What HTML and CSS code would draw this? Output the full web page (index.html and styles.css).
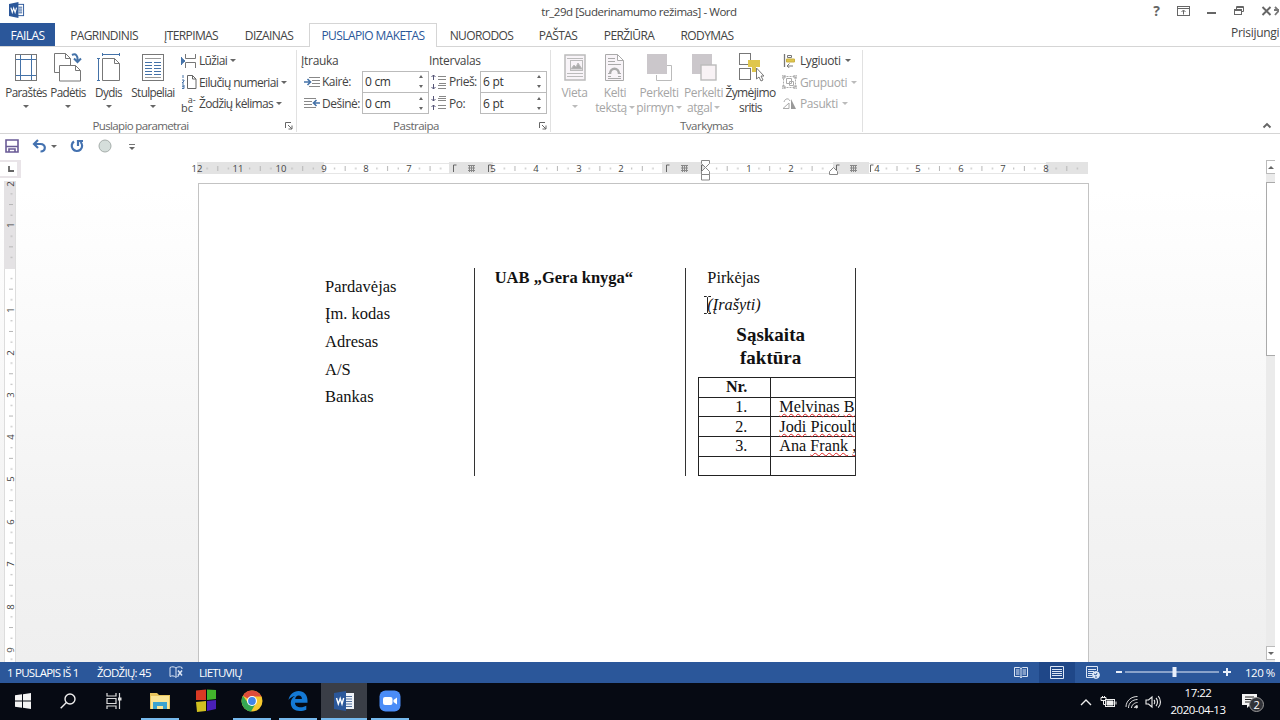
FILE: index.html
```html
<!DOCTYPE html>
<html lang="lt">
<head>
    <meta charset="UTF-8">
    <meta name="viewport" content="width=device-width, initial-scale=1.0">
    <title>tr_29d [Suderinamumo režimas] - Word</title>
    <link rel="stylesheet" href="styles.css">
</head>
<body>
    <header class="titlebar">
        <svg class="word-logo" width="16" height="16" viewBox="0 0 17 17">
            <rect x="8.5" y="2.5" width="7" height="12" fill="#fff" stroke="#2b579a"/>
            <path d="M10 5.5h4M10 7.5h4M10 9.5h4M10 11.5h4" stroke="#2b579a"/>
            <path d="M0 2L10 0V17L0 15Z" fill="#2b579a"/>
            <path d="M2 6l1.5 5L5 6.5 6.5 11 8 6" fill="none" stroke="#fff" stroke-width="1.2"/>
        </svg>
        <div class="title">tr_29d [Suderinamumo režimas] - Word</div>
        <div class="window-controls">
            <span class="help">?</span>
            <svg width="13" height="10" viewBox="0 0 13 10" fill="none" stroke="#666"><rect x=".5" y=".5" width="12" height="9"/><path d="M1 2.5h11M6.5 8.5V4.5M4.5 6l2-2 2 2"/></svg>
            <svg width="13" height="10" viewBox="0 0 13 10"><path d="M2 7h9" stroke="#666" stroke-width="2"/></svg>
            <svg width="13" height="10" viewBox="0 0 13 10" fill="none" stroke="#666"><path d="M4.5 3V.5h7v5H9.5M4.5 1.5h7"/><rect x="2.5" y="3.5" width="7" height="5"/><path d="M2.5 4.5h7"/></svg>
            <svg width="13" height="10" viewBox="0 0 13 10"><path d="M2.5 1l8 8M10.5 1l-8 8" stroke="#666" stroke-width="1.9"/></svg>
            <svg class="cut" width="5" height="10" viewBox="0 0 5 10"><path d="M1 1l8 8M1 9l6-7M0 4h5" stroke="#777" stroke-width="1.8"/></svg>
        </div>
    </header>

    <nav class="tabs">
        <div class="tab file">FAILAS</div>
        <div class="tab t-home">PAGRINDINIS</div>
        <div class="tab t-insert">ĮTERPIMAS</div>
        <div class="tab t-design">DIZAINAS</div>
        <div class="tab active">PUSLAPIO MAKETAS</div>
        <div class="tab t-refs">NUORODOS</div>
        <div class="tab t-mail">PAŠTAS</div>
        <div class="tab t-review">PERŽIŪRA</div>
        <div class="tab t-view">RODYMAS</div>
        <div class="signin">Prisijungi</div>
    </nav>

    <section class="ribbon">
        <div class="group page-setup">
            <div class="tools">
                <div class="big w42">
                    <svg width="24" height="30" viewBox="0 0 24 30" fill="none"><rect x="1.5" y="1.5" width="21" height="26" stroke="#777"/><path d="M6.5 2v25M17.5 2v25M2 6.5h20M2 22.5h20" stroke="#4472a8"/></svg>
                    <span>Paraštės</span><i class="arrow"></i>
                </div>
                <div class="big w42">
                    <svg width="28" height="30" viewBox="0 0 28 30" fill="#fff" stroke="#777"><path d="M.5.5h11l5 5v14h-16zM11.5.5v5h5"/><path d="M5.5 12.5h16l5 5v10.500h-21zM21.5 12.5v5h5"/><path d="M18 2c4-2 6 1 5.500 6M20 5.500l3.500 3.500L27 5.500" fill="none" stroke="#4472a8" stroke-width="2"/></svg>
                    <span>Padėtis</span><i class="arrow"></i>
                </div>
                <div class="big w39">
                    <svg width="24" height="30" viewBox="0 0 24 30" fill="none"><path d="M5.5 5.5h12l5 5v17h-17zM17.5 5.5v5h5" stroke="#777"/><path d="M5 1.5h18M5.5 0v3M22.5 0v3M1.5 6v21M0 5.5h3M0 27.5h3" stroke="#4472a8"/></svg>
                    <span>Dydis</span><i class="arrow"></i>
                </div>
                <div class="big w50">
                    <svg width="24" height="30" viewBox="0 0 24 30" fill="none"><rect x="1.5" y="1.5" width="21" height="26" stroke="#777"/><path d="M4 5.5h16M4 24.5h16" stroke="#999"/><path d="M4 9.5h7M13 9.5h7M4 12.5h7M13 12.5h7M4 15.5h7M13 15.5h7M4 18.5h7M13 18.5h7M4 21.5h7M13 21.5h7" stroke="#4472a8"/></svg>
                    <span>Stulpeliai</span><i class="arrow"></i>
                </div>
                <div class="small-col">
                    <div class="small">
                        <svg width="16" height="14" viewBox="0 0 16 14" fill="none" stroke="#777"><path d="M4.5 0v4.500h10V0M4.5 14V8.500h10V14"/><path d="M.5 3v8M1 4.500l3 2.500-3 2.500z" fill="#4472a8" stroke="#4472a8"/></svg>
                        <span>Lūžiai</span><i class="arrow"></i>
                    </div>
                    <div class="small">
                        <svg width="16" height="14" viewBox="0 0 16 14" fill="none"><path d="M6.5.5h5l3.500 3.500v9.500h-8.500zM11.5.5v3.500h3.500" stroke="#666"/><path d="M2 0v3M1 5h2v1L1 8h2M1 10h2v3.500H1M3 11.700H1" stroke="#4472a8"/></svg>
                        <span>Eilučių numeriai</span><i class="arrow"></i>
                    </div>
                    <div class="small">
                        <span class="abc"><span>b</span><span class="stack"><span class="sup">a-</span><span>c</span></span></span>
                        <span>Žodžių kėlimas</span><i class="arrow"></i>
                    </div>
                </div>
            </div>
            <div class="group-label">Puslapio parametrai</div>
            <svg class="launcher" width="8" height="8" viewBox="0 0 8 8" fill="none" stroke="#666"><path d="M.5 6V.5H6M3 3l4 4M7 3.5V7H3.5"/></svg>
        </div>

        <div class="group paragraph">
            <div class="tools">
                <div class="spacing-col indent">
                    <div class="heading">Įtrauka</div>
                    <div class="field">
                        <svg width="16" height="12" viewBox="0 0 16 12" fill="none"><path d="M5 1.5h11M8 4.5h8M8 7.5h8M5 10.5h11" stroke="#888"/><path d="M0 6h6M3.5 3l3 3-3 3" stroke="#4472a8" stroke-width="1.6"/></svg>
                        <label>Kairė:</label>
                        <div class="spin"><span>0 cm</span><i class="updown"></i></div>
                    </div>
                    <div class="field">
                        <svg width="16" height="12" viewBox="0 0 16 12" fill="none"><path d="M0 1.5h12M0 4.5h8M0 7.5h8M0 10.5h12" stroke="#888"/><path d="M16 6h-6M12.5 3l-3 3 3 3" stroke="#4472a8" stroke-width="1.6"/></svg>
                        <label>Dešinė:</label>
                        <div class="spin"><span>0 cm</span><i class="updown"></i></div>
                    </div>
                </div>
                <div class="spacing-col interval">
                    <div class="heading">Intervalas</div>
                    <div class="field">
                        <svg width="16" height="16" viewBox="0 0 16 16" fill="none"><path d="M7 2.5h8M7 5.5h8M8 9.5h7M7 11.5h8M7 14.5h8" stroke="#888"/><path d="M2.5 6V1M.5 3l2-2 2 2M2.5 10v5M.5 13l2 2 2-2" stroke="#557"/></svg>
                        <label>Prieš:</label>
                        <div class="spin"><span>6 pt</span><i class="updown"></i></div>
                    </div>
                    <div class="field">
                        <svg width="16" height="16" viewBox="0 0 16 16" fill="none"><path d="M8 1.5h7M7 3.5h8M7 5.5h8M7 10.5h8M7 13.5h8" stroke="#888"/><path d="M2.5 1v5M.5 4l2 2 2-2M2.5 15v-5M.5 12l2-2 2 2" stroke="#557"/></svg>
                        <label>Po:</label>
                        <div class="spin"><span>6 pt</span><i class="updown"></i></div>
                    </div>
                </div>
            </div>
            <div class="group-label">Pastraipa</div>
            <svg class="launcher" width="8" height="8" viewBox="0 0 8 8" fill="none" stroke="#666"><path d="M.5 6V.5H6M3 3l4 4M7 3.5V7H3.5"/></svg>
        </div>

        <div class="group arrange">
            <div class="tools">
                <div class="big w41 off">
                    <svg width="24" height="30" viewBox="0 0 24 30" fill="none" stroke="#bbb"><rect x="2" y="2" width="20" height="25" fill="#f8f4f8" stroke-width="1.5"/><path d="M4 5.5h16M4 20.5h16M4 23.5h16"/><rect x="7.5" y="7.5" width="12" height="10"/><path d="M8 16l3-4 2 2 2-4 4 6z" fill="#aaa"/></svg>
                    <span>Vieta</span><i class="arrow"></i>
                </div>
                <div class="big w40 off">
                    <svg width="22" height="30" viewBox="0 0 22 30" fill="none" stroke="#aaa"><path d="M1.5 1.5h12l6 6v20h-18zM13.5 1.5v6h6" fill="#f8f4f8"/><path d="M4 5.5h7M4 8.5h7M4 11.5h13M4 23.5h3M14 23.5h3M4 20.5h2M15 20.5h2M4 25.5h13"/><path d="M6 21c0-7 9-7 9 0" stroke-width="2.5"/></svg>
                    <span>Kelti<br>tekstą<i class="arrow"></i></span>
                </div>
                <div class="big w48 off">
                    <svg width="27" height="30" viewBox="0 0 27 30"><path d="M21 12.5h4.500v15h-15V22" fill="#fff" stroke="#bbb"/><rect x="1" y="1" width="20" height="20" fill="#cbc7cb"/></svg>
                    <span>Perkelti<br>pirmyn<i class="arrow"></i></span>
                </div>
                <div class="big w41 off">
                    <svg width="26" height="30" viewBox="0 0 26 30"><rect x="1" y="1" width="20" height="20" fill="#cbc7cb"/><rect x="10" y="12" width="15" height="15" fill="#f8f2f5" stroke="#bbb" stroke-width="1.4"/></svg>
                    <span>Perkelti<br>atgal<i class="arrow"></i></span>
                </div>
                <div class="big w53">
                    <svg width="26" height="30" viewBox="0 0 26 30" fill="#fff" stroke="#777"><rect x="1.5" y=".5" width="11" height="11"/><rect x="1.5" y="15.5" width="11" height="11"/><path d="M10 7h12v7h-4v5h-4v-5h-4z" fill="#dfc64c" stroke="none"/><path d="M18.5 15v11l2.500-2 2 4 2-1-2-4h3z"/></svg>
                    <span>Žymėjimo<br>sritis</span>
                </div>
                <div class="small-col">
                    <div class="small">
                        <svg width="15" height="14" viewBox="0 0 15 14" fill="none" stroke="#777"><path d="M2.5 0v13" stroke-width="1.3"/><path d="M5.5 1.5h4v2h-4z"/><path d="M4.5 5h8v3h-8z" fill="#dfc64c" stroke="#c9b044"/><path d="M11 12H5M7.5 9.5L5 12l2.500 2"/></svg>
                        <span>Lygiuoti</span><i class="arrow"></i>
                    </div>
                    <div class="small off">
                        <svg width="15" height="14" viewBox="0 0 15 14" fill="none" stroke="#aaa"><rect x="1.5" y="1.5" width="12" height="11" stroke-dasharray="2 1"/><path d="M4.5 3.5h5v5h-5zM7.5 6.5h4v4h-4zM0 0h3v3H0zM12 0h3v3h-3zM0 11h3v3H0zM12 11h3v3h-3z"/></svg>
                        <span>Grupuoti</span><i class="arrow"></i>
                    </div>
                    <div class="small off">
                        <svg width="15" height="14" viewBox="0 0 15 14"><path d="M1 11.5h6V6zM2 5c1-4 5-4 6-1" fill="none" stroke="#aaa"/><path d="M9 2v10h5z" fill="#999"/></svg>
                        <span>Pasukti</span><i class="arrow"></i>
                    </div>
                </div>
            </div>
            <div class="group-label">Tvarkymas</div>
        </div>
        <svg class="collapse" width="10" height="7" viewBox="0 0 10 7"><path d="M1.5 5.5L5 2l3.500 3.500" fill="none" stroke="#666" stroke-width="1.9"/></svg>
    </section>

    <div class="quickbar">
        <svg width="14" height="14" viewBox="0 0 14 14" fill="none" stroke="#6a5b96" stroke-width="1.6"><path d="M1 1h12v12H1z"/><path d="M1 7.5h12M4 13v-3h6v3"/></svg>
        <svg class="undo" width="16" height="14" viewBox="0 0 16 14" fill="none" stroke="#4472b0" stroke-width="2.2"><path d="M6 1L2 5l4 4M2 5h6.500c6 0 5.500 7.500 0 7.500"/></svg>
        <i class="arrow"></i>
        <svg class="redo" width="14" height="14" viewBox="0 0 14 14" fill="none" stroke="#4472b0" stroke-width="2.2"><path d="M4 2.5a5.200 5.200 0 1 0 6.500.5M8 7V2h5"/></svg>
        <svg class="dot" width="14" height="14" viewBox="0 0 14 14"><circle cx="7" cy="7" r="6" fill="#d5dedb" stroke="#a6aeab"/></svg>
        <span class="customize"><i class="arrow"></i></span>
    </div>

    <main class="workspace">
        <aside class="left-ruler">
            <div class="tab-corner"><svg width="8" height="8" viewBox="0 0 8 8"><path d="M2 1v5h5" fill="none" stroke="#666" stroke-width="1.8"/></svg></div>
            <svg width="20" height="484" viewBox="0 178 20 484">
                <defs>
                    <pattern id="vticks" patternUnits="userSpaceOnUse" x="4" y="268" width="12" height="42.3">
                        <path d="M6.5 10.6h2M5 21.2h4M6.5 31.8h2" stroke="#b5b5b5"/>
                    </pattern>
                </defs>
                <rect x="4" y="181" width="12" height="88" fill="#e4e2e4"/>
                <rect x="4" y="269" width="12" height="393" fill="#fff"/>
                <path d="M15.5 181v481M4.5 269v393" stroke="#ddd"/>
                <rect x="4" y="186" width="12" height="476" fill="url(#vticks)"/>
                <g class="ruler-num">
                    <text transform="translate(14 184) rotate(-90)">2</text>
                    <text transform="translate(14 225) rotate(-90)">1</text>
                    <text transform="translate(14 310) rotate(-90)">1</text>
                    <text transform="translate(14 353) rotate(-90)">2</text>
                    <text transform="translate(14 395) rotate(-90)">3</text>
                    <text transform="translate(14 437) rotate(-90)">4</text>
                    <text transform="translate(14 479) rotate(-90)">5</text>
                    <text transform="translate(14 522) rotate(-90)">6</text>
                    <text transform="translate(14 564) rotate(-90)">7</text>
                    <text transform="translate(14 607) rotate(-90)">8</text>
                    <text transform="translate(14 650) rotate(-90)">9</text>
                </g>
            </svg>
        </aside>

        <div class="canvas">
            <svg class="top-ruler" width="910" height="23" viewBox="190 160 910 23">
                <defs>
                    <pattern id="hticks" patternUnits="userSpaceOnUse" x="706" y="162" width="42.45" height="12">
                        <path d="M10.6 5.5v2M21.2 4v5M31.8 5.5v2" stroke="#b5b5b5"/>
                    </pattern>
                </defs>
                <rect x="197" y="163" width="891" height="11" fill="#fff"/>
                <path d="M197 163.5h891M197 173.5h891" stroke="#e6e6e6"/>
                <path d="M197 162h127v12h-127zM449 162h44v12h-44zM662 162h44v12h-44zM833 162h36v12h-36zM1046 162h42v12h-42z" fill="#e3e3e3"/>
                <path d="M203 162h246v12h-246zM499 162h163v12h-163zM708 162h122v12h-122zM882 162h206v12h-206z" fill="url(#hticks)"/>
                <g class="ruler-num">
                    <text x="197" y="172">12</text>
                    <text x="238" y="172">11</text>
                    <text x="281" y="172">10</text>
                    <text x="324" y="172">9</text>
                    <text x="366" y="172">8</text>
                    <text x="409" y="172">7</text>
                    <text x="493" y="172">5</text>
                    <text x="536" y="172">4</text>
                    <text x="579" y="172">3</text>
                    <text x="621" y="172">2</text>
                    <text x="749" y="172">1</text>
                    <text x="791" y="172">2</text>
                    <text x="877" y="172">4</text>
                    <text x="918" y="172">5</text>
                    <text x="961" y="172">6</text>
                    <text x="1003" y="172">7</text>
                    <text x="1046" y="172">8</text>
                </g>
                <path d="M453.5 172v-7h3M488.5 172v-7h3M666.5 172v-7h3M701.5 172v-7h2M836.5 172v-7h3M870.5 172v-7h3" fill="none" stroke="#666"/>
                <path d="M468 165.5h7M468 168h7M468 170.5h7M469.5 165v7M471.5 165v7M473.5 165v7M681 165.5h7M681 168h7M681 170.5h7M682.5 165v7M684.5 165v7M686.5 165v7M850 165.5h7M850 168h7M850 170.5h7M851.5 165v7M853.5 165v7M855.5 165v7" stroke="#888"/>
                <path d="M701.5 160.5h8v3l-4 4-4-4zM701.5 174.5v-3l4-4 4 4v3zM701.5 174.5h8v5.500h-8zM829.5 174.5v-3l4-4 4 4v3z" fill="#fff" stroke="#888"/>
            </svg>

            <article class="page">
                <div class="layout-table">
                    <div class="cell seller">
                        <p>Pardavėjas</p>
                        <p>Įm. kodas</p>
                        <p>Adresas</p>
                        <p>A/S</p>
                        <p>Bankas</p>
                    </div>
                    <div class="cell company"><p>UAB „Gera knyga“</p></div>
                    <div class="cell buyer">
                        <p>Pirkėjas</p>
                        <p class="fill-in">(Įrašyti)
                            <svg class="ibeam" width="9" height="18" viewBox="0 0 9 18"><path d="M1 .5h2.500l1 1 1-1H8M1 17.5h2.500l1-1 1 1H8M4.5 1.5v15" fill="none" stroke="#222"/></svg>
                        </p>
                        <h1>Sąskaita<br>faktūra</h1>
                        <table class="items">
                            <tr><th>Nr.</th><th></th></tr>
                            <tr><td>1.</td><td><u>Melvinas</u> <u>B</u></td></tr>
                            <tr><td>2.</td><td><u>Jodi</u> <u>Picoult</u></td></tr>
                            <tr><td>3.</td><td>Ana <u>Frank</u> <u>„</u></td></tr>
                            <tr><td></td><td></td></tr>
                        </table>
                    </div>
                </div>
            </article>
        </div>

        <div class="scrollbar">
            <div class="scroll-btn"><i class="arrow up"></i></div>
            <div class="thumb"></div>
            <div class="scroll-btn down"><i class="arrow"></i></div>
        </div>
    </main>

    <footer class="statusbar">
        <span class="pages">1 PUSLAPIS IŠ 1</span>
        <span class="words">ŽODŽIŲ: 45</span>
        <svg class="proof" width="15" height="13" viewBox="0 0 15 13" fill="none" stroke="#dce6f5"><path d="M7 2C5 .5 3 .5 1 1.5v9c2-1 4-1 6 1 1-1 2-1.500 3-1.500M7 2v9M7 2c2-1.500 4-1.500 6-.5V3"/><path d="M9 4.5l4 5M13 4.5l-4 5" stroke-width="1.5"/></svg>
        <span class="lang">LIETUVIŲ</span>
        <div class="views">
            <span class="view"><svg width="14" height="13" viewBox="0 0 14 13" fill="none" stroke="#dce6f5"><path d="M.5 1.5h5l1.500 1 1.500-1h5v9h-5l-1.500 1-1.500-1h-5zM7 2v10M2 4h3.500M2 6h3.500M2 8h3.500M8.5 4H12M8.5 6H12M8.5 8H12"/></svg></span>
            <span class="view on"><svg width="14" height="13" viewBox="0 0 14 13" fill="none" stroke="#dce6f5"><path d="M.5.5h13v12H.5zM2 3.5h10M2 5.5h10M2 7.5h10M2 9.5h10"/></svg></span>
            <span class="view"><svg width="14" height="13" viewBox="0 0 14 13" fill="none" stroke="#dce6f5"><path d="M7 11.5H.5V.5h11V5M2 3.5h8M2 5.5h6M2 7.5h5M2 9.5h4"/><circle cx="10" cy="9" r="3.4" fill="#dce6f5"/><path d="M8 8l2 1 1-2M10 12v-2" stroke="#2b579a"/></svg></span>
        </div>
        <svg class="zoom-slider" width="116" height="14" viewBox="0 0 116 14" stroke="#e8effa"><path d="M1 7h6M108 7h8M112 3v8" stroke-width="2"/><path d="M10 7h94"/><path d="M59.5 2v10" stroke-width="4"/></svg>
        <span class="percent">120 %</span>
    </footer>

    <div class="taskbar">
        <div class="task sys"><svg width="16" height="16" viewBox="0 0 16 16" fill="#f4f4f4"><path d="M0 2.300L7 1.300V7.600H0zM8 1.200L16 0v7.600H8zM0 8.400h7v6.300L0 13.700zM8 8.400h8V16l-8-1.200z"/></svg></div>
        <div class="task sys"><svg width="16" height="16" viewBox="0 0 16 16" fill="none" stroke="#eee" stroke-width="1.4"><circle cx="10" cy="6" r="5"/><path d="M6.4 9.600L.7 15.300"/></svg></div>
        <div class="task sys wide"><svg width="16" height="16" viewBox="0 0 16 16" fill="none" stroke="#ddd" stroke-width="1.2"><path d="M1 0v3h9V0M1 16v-3h9v3M1 5.5h9v5H1zM13.5 0v16"/><path d="M12 6h3.500" stroke-width="3"/></svg></div>
        <div class="task open"><svg width="22" height="18" viewBox="0 0 22 18"><path d="M1 1h7l2 2h11v14H1z" fill="#e8c55d"/><path d="M2 4h18v13H2z" fill="#fae596"/><path d="M4 17v-7h14v7h-4v-3H8v3z" fill="#3ba3d0"/></svg></div>
        <div class="task"><svg width="22" height="24" viewBox="0 0 22 24"><path d="M1 1.5l10-1V11H1z" fill="#d83a24"/><path d="M12 .5L21 1v9l-9 1z" fill="#42b42c"/><path d="M1 13l10-1v10L2 23z" fill="#d0c020"/><path d="M12 12l9-1v9l-9 2z" fill="#4a20b8"/></svg></div>
        <div class="task open"><svg width="22" height="22" viewBox="0 0 22 22"><circle cx="11" cy="11" r="10.5" fill="#f6c92f"/><path d="M11 11L1.900 5.800A10.500 10.500 0 0 1 20.100 5.800L20.500 6.500H11z" fill="#dd4c3b"/><path d="M1.900 5.800A10.500 10.500 0 0 0 10 21.500L15 13 11 15 7 13z" fill="#35a552"/><circle cx="11" cy="11" r="5" fill="#fff"/><circle cx="11" cy="11" r="3.9" fill="#4285e8"/></svg></div>
        <div class="task open"><svg width="20" height="20" viewBox="0 0 20 20"><path d="M.5 9C1.500 3.500 5.500 0 10.500 0 16 0 19.500 4 19.500 9.500v2.300H7c0 3 2.500 4.500 5.500 4.500 2.400 0 4.300-.6 5.800-1.500v3.900C16.500 19.600 14.200 20 11.800 20 6.500 20 2.800 17 2.800 12c0-3 1.500-5.500 4.200-7C4 5.500 2 7 .5 9zM7.200 8h6.700c0-2.200-1-3.500-3.200-3.500-2 0-3.200 1.300-3.500 3.500z" fill="#1479d4"/></svg></div>
        <div class="task open current"><svg width="22" height="20" viewBox="0 0 22 20"><path d="M10 2h11v16H10z" fill="#eef2f8"/><path d="M13 5.5h6M13 8h6M13 10.5h6M13 13h6M13 15.5h6" stroke="#52709f"/><path d="M1 2L13 0v20L1 18z" fill="#2b579a"/><path d="M3.5 7l1.800 6L7.200 7.500 9 13l1.700-6" fill="none" stroke="#fff" stroke-width="1.4"/></svg></div>
        <div class="task open"><svg width="22" height="22" viewBox="0 0 22 22"><rect x=".5" y=".5" width="21" height="21" rx="6" fill="#4a8cf7"/><rect x="4" y="7" width="9.5" height="8" rx="2" fill="#fff"/><path d="M14.5 10l3.500-2.500v7L14.500 12z" fill="#fff"/></svg></div>
        <div class="tray">
            <svg width="12" height="16" viewBox="0 0 12 16"><path d="M1 11l5-5 5 5" fill="none" stroke="#eee" stroke-width="1.4"/></svg>
            <svg class="battery" width="17" height="16" viewBox="0 0 17 16" fill="none" stroke="#eee"><rect x="5.5" y="5.5" width="9" height="7"/><path d="M7 7h6v4H7z" fill="#eee"/><path d="M16 7.5v3M1 3.5h5v3H1zM3.5 6.5v4h2M2.5 2v1M4.5 2v1"/></svg>
            <svg class="wifi" width="14" height="16" viewBox="0 0 14 16" fill="none" stroke="#ddd"><path d="M1 13C1 7 6 2.500 12.500 2.500M3.5 14c0-5 4-8.500 9-8.500M6.5 14c0-3 3-5.500 6-5.500M9.5 14c0-1.500 1.500-2.500 3-2.500"/><circle cx="11.5" cy="13" r="1" fill="#eee"/></svg>
            <svg class="sound" width="17" height="16" viewBox="0 0 17 16" fill="none" stroke="#eee" stroke-width="1.1"><path d="M1 6h2.500L7 3v10l-3.500-3H1zM9 6c1 1 1 3 0 4M11 4c2 2 2 6 0 8M13.200 2.200c3 3 3 8.500 0 11.500"/></svg>
            <div class="clock"><span>17:22</span><span>2020-04-13</span></div>
            <div class="notice">
                <svg width="15" height="15" viewBox="0 0 15 15"><path d="M0 0h15v11H8l-3 3v-3H0z" fill="#f4f4f4"/><path d="M3 3h9M3 5.5h9M3 8h6" stroke="#222"/></svg>
                <span class="badge">2</span>
            </div>
        </div>
    </div>
</body>
</html>
```
FILE: styles.css
```css
* {
    box-sizing: border-box;
}
body {
    margin: 0;
    width: 1280px;
    height: 720px;
    overflow: hidden;
    display: flex;
    flex-direction: column;
    background: #fff;
    color: #444;
    font-family: "Open Sans", "Noto Sans", sans-serif;
    font-size: 12px;
    letter-spacing: -0.3px;
}
svg {
    display: block;
    flex: none;
}
p, h1 {
    margin: 0;
}

/* title bar */
.titlebar {
    display: flex;
    height: 23px;
    padding-left: 9px;
    padding-top: 2px;
}
.word-logo {
    margin-right: -16px;
}
.title {
    width: 1260px;
    flex: none;
    text-align: center;
    line-height: 20px;
    font-size: 11.5px;
    letter-spacing: -0.45px;
}
.window-controls {
    display: flex;
    align-items: center;
    height: 17px;
    gap: 14.4px;
    margin-left: -119px;
}
.help {
    width: 13px;
    text-align: center;
    font-size: 14px;
    font-weight: bold;
    color: #666;
}
.cut {
    margin-left: -13px;
}

/* tabs */
.tabs {
    display: flex;
    height: 24px;
    border-bottom: 1px solid #d5d5d5;
}
.tab {
    height: 23px;
    line-height: 25px;
    text-align: center;
    white-space: nowrap;
    letter-spacing: -0.6px;
}
.file {
    width: 55px;
    background: #2b579a;
    color: #fff;
}
.t-home { width: 98px; }
.t-insert { width: 76px; }
.t-design { width: 80px; }
.t-refs { width: 89px; }
.t-mail { width: 64px; }
.t-review { width: 78px; }
.t-view { width: 78px; }
.active {
    width: 128px;
    height: 24px;
    line-height: 23px;
    background: #fff;
    border: 1px solid #d5d5d5;
    border-bottom: none;
    color: #2b579a;
}
.signin {
    margin-left: auto;
    width: 49px;
    overflow: hidden;
    line-height: 20px;
    white-space: nowrap;
}

/* ribbon */
.ribbon {
    display: flex;
    height: 87px;
    border-bottom: 1px solid #d5d5d5;
    letter-spacing: -0.5px;
}
.group {
    position: relative;
    border-right: 1px solid #e1e1e1;
    height: 82px;
    margin-top: 3px;
}
.page-setup { width: 297px; }
.paragraph { width: 254px; }
.arrange { width: 312px; }
.tools {
    display: flex;
    height: 68px;
}
.page-setup .tools { padding-left: 5px; }
.arrange .tools { padding-left: 3px; }
.group-label {
    text-align: center;
    color: #666;
    font-size: 11.5px;
    line-height: 16px;
    padding-right: 15px;
}
.page-setup .group-label {
    letter-spacing: -0.65px;
}
.arrange .group-label {
    padding-right: 0;
}
.launcher {
    position: absolute;
    right: 3px;
    bottom: 2px;
}
.big {
    display: flex;
    flex-direction: column;
    align-items: center;
    text-align: center;
    padding-top: 2px;
    line-height: 15px;
    white-space: nowrap;
    letter-spacing: -0.65px;
}
.big svg {
    margin-top: 1px;
    margin-bottom: 2px;
}
.big > .arrow {
    margin-top: 5px;
}
.page-setup .big {
    font-size: 11.7px;
}
.off.big {
    letter-spacing: -0.4px;
}
.w39 { width: 39px; }
.w40 { width: 40px; }
.w41 { width: 41px; }
.w42 { width: 42px; }
.w48 { width: 48px; }
.w50 { width: 50px; }
.w53 { width: 53px; }
.arrow {
    display: inline-block;
    border: 3px solid transparent;
    border-top: 3px solid #666;
    border-bottom: 0;
}
.arrow.up {
    border-top: 0;
    border-bottom: 3px solid #666;
}
span .arrow {
    margin-left: 2px;
    vertical-align: 3px;
}
.off {
    color: #a5a5a5;
}
.off .arrow {
    border-top-color: #bbb;
}
.small-col {
    padding-left: 3px;
}
.page-setup .small-col {
    letter-spacing: -0.65px;
}
.arrange .small-col {
    padding-left: 5px;
    letter-spacing: -0.4px;
}
.small {
    display: flex;
    align-items: center;
    height: 21.5px;
    gap: 2px;
    white-space: nowrap;
}
.arrange .small {
    gap: 3px;
}
.small .arrow {
    margin-left: 1px;
}
.abc {
    display: flex;
    align-items: flex-end;
    width: 16px;
    line-height: 9px;
    font-size: 11px;
    letter-spacing: 0;
}
.stack {
    display: flex;
    flex-direction: column;
}
.stack .sup {
    font-size: 9px;
    line-height: 7px;
}

/* indent and spacing fields */
.indent {
    width: 132px;
    padding-left: 4px;
}
.interval {
    width: 119px;
}
.heading {
    line-height: 21px;
    height: 21px;
    letter-spacing: -0.3px;
}
.field {
    display: flex;
    align-items: center;
    height: 21.5px;
}
.indent .field { padding-left: 3px; }
.interval .field { padding-left: 2px; }
.field label {
    width: 42px;
    padding-left: 2px;
}
.interval label {
    width: 33px;
}
.spin {
    display: flex;
    align-items: center;
    justify-content: space-between;
    width: 67px;
    height: 22px;
    padding: 0 5px 0 2px;
    border: 1px solid #bbb;
    color: #333;
    letter-spacing: -0.3px;
}
.updown {
    height: 13px;
    display: flex;
    flex-direction: column;
    justify-content: space-between;
}
.updown::before,
.updown::after {
    content: "";
    border: 2.5px solid transparent;
}
.updown::before {
    border-top: 0;
    border-bottom: 3px solid #666;
}
.updown::after {
    border-bottom: 0;
    border-top: 3px solid #666;
}
.collapse {
    margin-left: auto;
    margin-right: 8px;
    margin-top: 75px;
}

/* quick access bar */
.quickbar {
    display: flex;
    align-items: center;
    height: 26px;
    padding: 0 0 2px 5px;
}
.undo { margin-left: 13px; }
.quickbar .undo + .arrow { margin-left: 3px; }
.redo { margin-left: 13px; }
.dot { margin-left: 14px; }
.customize {
    display: flex;
    margin-left: 17px;
    border-top: 1px solid #777;
    padding-top: 2px;
    margin-top: 2px;
}
.customize .arrow {
    margin-left: 0;
}

/* document area */
.workspace {
    display: flex;
    height: 502px;
    background: linear-gradient(#fff 6%, #fbfbfb 28%, #f3f3f3 70%, #efefef 100%);
}
.left-ruler {
    width: 20px;
}
.tab-corner {
    display: flex;
    align-items: center;
    justify-content: center;
    width: 21px;
    height: 18px;
    padding-left: 4px;
    border: solid #e9e4e8;
    border-width: 2px 4px 2px 0;
}
.ruler-num {
    font-size: 9.5px;
    letter-spacing: 0;
    text-anchor: middle;
    fill: #444;
}
.canvas {
    padding-left: 170px;
    width: 1246px;
}
.page {
    margin-left: 8px;
    width: 891px;
    height: 479px;
    border: 1px solid #c3c3c3;
    border-bottom: 0;
    background: #fff;
    padding: 84px 0 0 116px;
    font-family: "Liberation Serif", serif;
    font-size: 16.5px;
    letter-spacing: 0;
    color: #111;
}
.layout-table {
    display: flex;
    height: 208px;
    width: 541px;
}
.cell {
    border-right: 1px solid #333;
    overflow: hidden;
    line-height: 27.7px;
}
.seller {
    width: 160px;
    padding: 4.5px 0 0 10px;
}
.company {
    width: 212px;
    padding: 1px 0 0 20px;
    line-height: 18px;
    font-weight: bold;
}
.buyer {
    width: 170px;
    line-height: 18px;
    padding-top: 1px;
}
.buyer p {
    padding-left: 21px;
    font-size: 16.3px;
}
.buyer .fill-in {
    position: relative;
    margin-top: 9px;
    font-style: italic;
}
.ibeam {
    position: absolute;
    left: 17px;
    top: 0;
}
.buyer h1 {
    font-size: 19px;
    line-height: 22.5px;
    text-align: center;
    margin: 10px 0 8px;
}
.items {
    width: 192px;
    margin-left: 12px;
    border-collapse: collapse;
    table-layout: fixed;
    font-size: 16.2px;
}
.items td,
.items th {
    border: 1px solid #222;
    padding: 0 0 0 8px;
    height: 19.7px;
    line-height: 18px;
    white-space: nowrap;
}
.items tr > :first-child {
    width: 72px;
    text-align: right;
    padding: 0 23px 0 0;
}
.items u {
    text-decoration: underline wavy #dd2222 1.3px;
    text-underline-offset: 1px;
    text-decoration-skip-ink: none;
}

/* scrollbar */
.scrollbar {
    display: flex;
    flex-direction: column;
    width: 9px;
    background: #ebebeb;
    box-shadow: 5px 0 #fff;
}
.scroll-btn {
    display: flex;
    align-items: center;
    justify-content: center;
    height: 14px;
    background: #fff;
    border: 1px solid #bbb;
    border-right: 0;
}
.thumb {
    height: 174px;
    margin-top: 8px;
    background: #fff;
    border: 1px solid #aaa;
    border-right: 0;
}
.down {
    margin-top: auto;
    margin-bottom: 2px;
}

/* status bar */
.statusbar {
    display: flex;
    align-items: center;
    height: 21px;
    background: #2b579a;
    color: #fff;
    font-size: 11.5px;
    letter-spacing: -0.75px;
    line-height: 19px;
    padding-bottom: 1px;
    white-space: nowrap;
}
.pages {
    width: 90px;
    margin-left: 7px;
}
.words {
    width: 72px;
}
.proof {
    margin-right: 15px;
}
.views {
    display: flex;
    height: 21px;
    margin-left: auto;
    margin-bottom: -1px;
}
.view {
    display: flex;
    align-items: center;
    justify-content: center;
    width: 36px;
    padding-bottom: 1px;
}
.view.on {
    background: #1f4788;
}
.zoom-slider {
    margin-left: 4px;
}
.percent {
    width: 35px;
    margin-left: 14px;
    letter-spacing: -0.5px;
}

/* taskbar */
.taskbar {
    display: flex;
    height: 37px;
    background: #060a13;
    color: #fff;
}
.task {
    display: flex;
    align-items: center;
    justify-content: center;
    width: 46px;
    padding-bottom: 1px;
    position: relative;
}
.sys {
    width: 45px;
}
.wide {
    width: 47px;
}
.current {
    background: #3a3e47;
}
.open::after {
    content: "";
    position: absolute;
    left: 4px;
    right: 4px;
    bottom: 0;
    height: 2px;
    background: #76b9ed;
}
.current::after {
    left: 0;
    right: 0;
}
.tray {
    display: flex;
    align-items: center;
    margin-left: auto;
}
.battery { margin-left: 8px; }
.wifi { margin-left: 8px; }
.sound { margin-left: 6px; }
.clock {
    display: flex;
    flex-direction: column;
    align-items: center;
    width: 58px;
    margin-left: 7px;
    line-height: 16.5px;
    font-size: 11.5px;
    letter-spacing: -0.5px;
}
.notice {
    position: relative;
    margin-left: 15px;
    width: 38px;
}
.badge {
    position: absolute;
    left: 7px;
    top: 3px;
    width: 15px;
    height: 15px;
    border: 1px solid #999;
    border-radius: 50%;
    background: #303238;
    text-align: center;
    font-size: 11px;
    line-height: 13px;
}
```
